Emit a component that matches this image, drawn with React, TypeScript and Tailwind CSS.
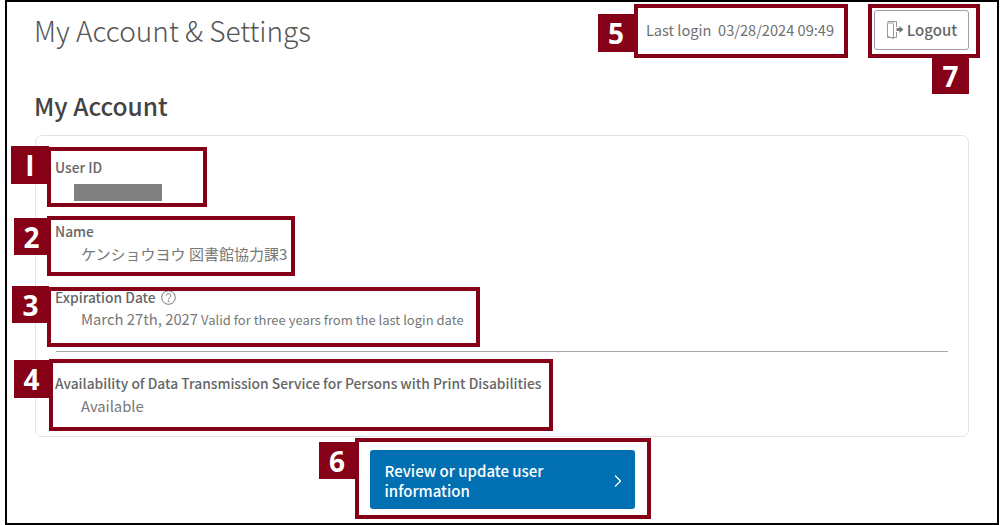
import React from "react";
import { ChevronRight } from "lucide-react";

function Tag({ className, children }: { className: string; children: React.ReactNode }) {
  return (
    <div className={"absolute flex items-center justify-center bg-[#860018] text-white text-[28px] leading-none font-bold font-['Open_Sans','Noto_Sans',sans-serif] " + className}>
      {children}
    </div>
  );
}

function Box({ className }: { className: string }) {
  return <div className={"absolute border-[4px] border-[#860018] " + className} />;
}

function Label({ children }: { children: React.ReactNode }) {
  return <div className="text-[13.8px] leading-[20px] font-medium text-[#666]">{children}</div>;
}

export default function App() {
  return (
    <div className="relative w-[1003px] h-[525px] bg-white pl-[5px] font-['Noto_Sans_CJK_JP','Noto_Sans',sans-serif]">
      <div className="w-[994px] h-[525px] border-2 border-black px-[28px]">
        <div className="flex justify-between items-start">
          <h1 className="-ml-px mt-[8px] text-[28px] leading-[40px] font-light text-[#555]">My Account &amp; Settings</h1>
          <div className="flex items-start">
            <div className="mt-[17px] text-[14.6px] leading-[22px] text-[#707070]">Last login&nbsp; 03/28/2024 09:49</div>
            <button className="ml-[40px] mt-[8px] w-[95px] h-[40px] flex items-center justify-center gap-[3px] border border-[#a0a0a0] rounded-[3px] text-[15px] font-medium text-[#666] bg-white">
              <svg width="18" height="20" viewBox="0 0 18 20" fill="none" stroke="#999" strokeWidth="1">
                <path d="M7.5 3H1.5v14.5H7.5" />
                <path d="M1.5 1.5H10.5V7M10.5 12v5.5H8" />
                <path d="M7.5 3.5V18.5L2 16.5" />
                <path d="M10.5 8h3V6l4 3.5-4 3.5v-2h-3z" fill="#777" stroke="none" />
              </svg>
              Logout
            </button>
          </div>
        </div>
        <h2 className="-ml-px mt-[39px] text-[24.5px] leading-[34px] font-medium text-[#444]">My Account</h2>
        <div className="mt-[12px] h-[302px] border border-[#e3e3e3] rounded-[7px] pl-[19px] pr-[20px] pt-[21px]">
          <Label>User ID</Label>
          <div className="ml-[19px] mt-[7px] w-[88px] h-[17px] bg-[#808080]" />
          <div className="mt-[20px]"><Label>Name</Label></div>
          <div className="ml-[26px] mt-px text-[15px] leading-[24px] text-[#777]">ケンショウヨウ 図書館協力課3</div>
          <div className="mt-[21px] flex items-center gap-[5px]">
            <Label>Expiration Date</Label>
            <svg width="15" height="15" viewBox="0 0 15 15" fill="none" stroke="#777" strokeWidth="1">
              <circle cx="7.5" cy="7.5" r="6.8" />
              <path d="M5.3 5.8c0-1.3 1-2.1 2.2-2.1s2.2.8 2.2 2c0 1.8-2.2 1.8-2.2 3.6" />
              <circle cx="7.5" cy="11.2" r="0.4" fill="#777" />
            </svg>
          </div>
          <div className="ml-[26px] mt-0 flex items-baseline gap-[3px] leading-[24px] text-[#777]">
            <span className="text-[14.8px]">March 27th, 2027</span>
            <span className="text-[13px]">Valid for three years from the last login date</span>
          </div>
          <div className="mt-[19px] ml-px h-px bg-[#a8a8a8]" />
          <div className="mt-[21px]"><Label>Availability of Data Transmission Service for Persons with Print Disabilities</Label></div>
          <div className="ml-[26px] mt-px text-[14.8px] leading-[24px] text-[#777]">Available</div>
        </div>
        <button className="mt-[13px] mx-auto w-[265px] h-[59px] flex items-center justify-between rounded-[3px] bg-[#0070b3] pl-[15px] pr-[7px] pt-[2px] text-left text-[15px] leading-[20px] font-medium text-white">
          <span className="w-[190px]">Review or update user information</span>
          <ChevronRight size={20} strokeWidth={1.5} />
        </button>
      </div>

      <Box className="left-[47px] top-[147px] w-[160px] h-[60px]" />
      <Tag className="left-[11px] top-[146px] w-[38px] h-[38px]">I</Tag>
      <Box className="left-[47px] top-[216px] w-[248px] h-[60px]" />
      <Tag className="left-[14px] top-[218px] w-[35px] h-[37px]">2</Tag>
      <Box className="left-[47px] top-[287px] w-[433px] h-[60px]" />
      <Tag className="left-[12px] top-[286px] w-[37px] h-[37px]">3</Tag>
      <Box className="left-[49px] top-[359px] w-[504px] h-[72px]" />
      <Tag className="left-[14px] top-[360px] w-[35px] h-[38px]">4</Tag>
      <Box className="left-[634px] top-[4px] w-[214px] h-[54px]" />
      <Tag className="left-[598px] top-[14px] w-[36px] h-[38px]">5</Tag>
      <Box className="left-[355px] top-[438px] w-[296px] h-[81px]" />
      <Tag className="left-[319px] top-[442px] w-[36px] h-[37px]">6</Tag>
      <Box className="left-[868px] top-[4px] w-[112px] h-[54px]" />
      <Tag className="left-[932px] top-[58px] w-[37px] h-[36px]">7</Tag>
    </div>
  );
}
